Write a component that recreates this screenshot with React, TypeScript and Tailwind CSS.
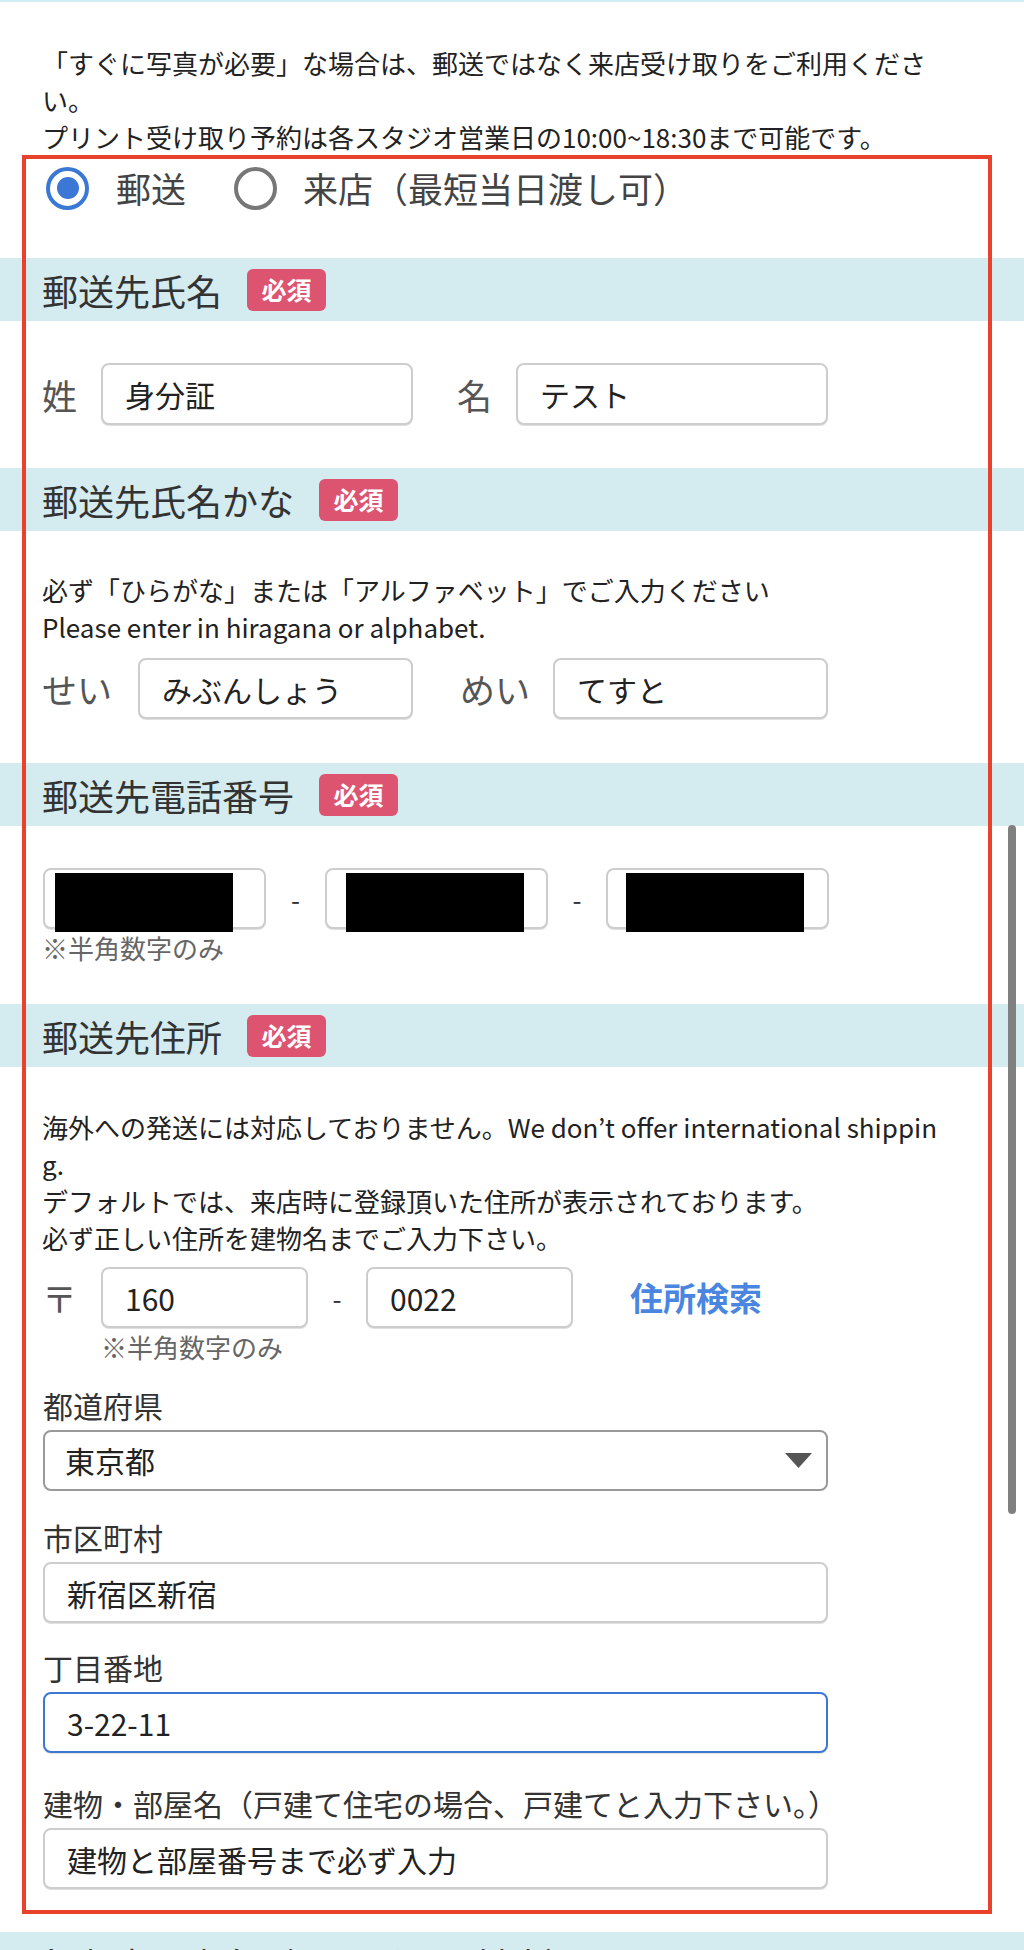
import React from 'react';

const SectionHeader = ({ title, required = true }: { title: string; required?: boolean }) => (
  <div className="flex h-[63px] items-center bg-[#d4ecf0] px-[42px]">
    <span className="text-[36px] leading-none text-[#333]">{title}</span>
    {required && (
      <span className="ml-[25px] flex h-[42px] w-[79px] items-center justify-center rounded-[6px] bg-[#dc5470] text-[25px] font-bold leading-none text-white">
        必須
      </span>
    )}
  </div>
);

const TextInput = ({
  value,
  className = '',
  focused = false,
}: {
  value: string;
  className?: string;
  focused?: boolean;
}) => (
  <input
    readOnly
    value={value}
    className={`h-[61px] rounded-[8px] border-2 bg-white pl-[22px] text-[30px] leading-[40px] text-[#222] shadow-[0_1px_0_rgba(0,0,0,0.12)] outline-none ${
      focused ? 'border-[#3b78d6]' : 'border-[#cdcdcd]'
    } ${className}`}
  />
);

const Radio = ({ checked }: { checked: boolean }) =>
  checked ? (
    <span className="flex h-[43px] w-[43px] shrink-0 items-center justify-center rounded-full border-[4px] border-[#3b78d6]">
      <span className="h-[22px] w-[22px] rounded-full bg-[#3b78d6]" />
    </span>
  ) : (
    <span className="block h-[43px] w-[43px] shrink-0 rounded-full border-[4px] border-[#777]" />
  );

const PhoneBox = ({ offset }: { offset: string }) => (
  <div className="relative">
    <TextInput value="" className="w-[223px]" />
    {/* redacted */}
    <div className={`absolute top-[5px] h-[59px] w-[178px] bg-black ${offset}`} />
  </div>
);

const Field = ({ label, className = '', children }: { label: string; className?: string; children: React.ReactNode }) => (
  <div className={className}>
    <div className="mb-[5px] text-[30px] leading-[40px] text-[#333]">{label}</div>
    {children}
  </div>
);

export default function App() {
  return (
    <div className="relative h-[1950px] w-[1024px] overflow-hidden border-t-2 border-[#cfeef4] bg-white font-['Noto_Sans_CJK_JP',sans-serif] text-[#222]">
      {/* Intro */}
      <p className="px-[42px] pt-[42px] text-[26px] leading-[37px]">
        「すぐに写真が必要」な場合は、郵送ではなく来店受け取りをご利用くださ
        <br />
        い。
        <br />
        プリント受け取り予約は各スタジオ営業日の10:00~18:30まで可能です。
      </p>

      {/* Shipping form */}
      <div className="relative pb-[25px]">
        {/* Delivery method */}
        <div className="flex items-center pl-[46px] pt-[11px]">
          <Radio checked />
          <span className="ml-[27px] text-[35px] leading-[44px] text-[#444]">郵送</span>
          <span className="ml-[48px] flex">
            <Radio checked={false} />
          </span>
          <span className="ml-[26px] text-[35px] leading-[44px] text-[#444]">来店（最短当日渡し可）</span>
        </div>

        {/* Name */}
        <div className="mt-[48px]">
          <SectionHeader title="郵送先氏名" />
        </div>
        <div className="mt-[42px] flex items-center px-[42px]">
          <span className="text-[35px] leading-none text-[#555]">姓</span>
          <TextInput value="身分証" className="ml-[24px] h-[62px] w-[312px]" />
          <span className="ml-[44px] text-[35px] leading-none text-[#555]">名</span>
          <TextInput value="テスト" className="ml-[24px] h-[62px] w-[312px]" />
        </div>

        {/* Kana */}
        <div className="mt-[43px]">
          <SectionHeader title="郵送先氏名かな" />
        </div>
        <p className="mt-[40px] px-[42px] text-[26px] leading-[37px]">
          必ず「ひらがな」または「アルファベット」でご入力ください
          <br />
          Please enter in hiragana or alphabet.
        </p>
        <div className="mt-[13px] flex items-center px-[42px]">
          <span className="text-[35px] leading-none text-[#555]">せい</span>
          <TextInput value="みぶんしょう" className="ml-[26px] w-[275px]" />
          <span className="ml-[47px] text-[35px] leading-none text-[#555]">めい</span>
          <TextInput value="てすと" className="ml-[23px] w-[275px]" />
        </div>

        {/* Phone */}
        <div className="mt-[44px]">
          <SectionHeader title="郵送先電話番号" />
        </div>
        <div className="mt-[42px] flex items-center pl-[43px]">
          <PhoneBox offset="left-[12px]" />
          <span className="w-[59px] text-center text-[26px] text-[#333]">-</span>
          <PhoneBox offset="left-[21px]" />
          <span className="w-[58px] text-center text-[26px] text-[#333]">-</span>
          <PhoneBox offset="left-[20px]" />
        </div>
        <p className="px-[42px] text-[26px] leading-[37px] text-[#666]">※半角数字のみ</p>

        {/* Address */}
        <div className="mt-[38px]">
          <SectionHeader title="郵送先住所" />
        </div>
        <p className="mt-[41px] px-[42px] text-[26px] leading-[37px]">
          海外への発送には対応しておりません。We don’t offer international shippin
          <br />
          g.
          <br />
          デフォルトでは、来店時に登録頂いた住所が表示されております。
          <br />
          必ず正しい住所を建物名までご入力下さい。
        </p>
        <div className="mt-[11px] flex items-center px-[42px]">
          <span className="text-[35px] leading-none text-[#555]">〒</span>
          <TextInput value="160" className="ml-[24px] w-[207px]" />
          <span className="w-[58px] text-center text-[26px] text-[#333]">-</span>
          <TextInput value="0022" className="w-[207px]" />
          <span className="ml-[57px] text-[33px] font-bold leading-none text-[#4a86e0]">住所検索</span>
        </div>
        <p className="pl-[101px] text-[26px] leading-[38px] text-[#666]">※半角数字のみ</p>

        <div className="px-[43px]">
          <Field label="都道府県" className="mt-[19px]">
            <div className="relative w-[785px]">
              <select
                defaultValue="東京都"
                className="h-[61px] w-full appearance-none rounded-[8px] border-2 border-[#999] bg-white pl-[20px] text-[30px] text-[#222] outline-none"
              >
                <option>東京都</option>
              </select>
              <svg className="pointer-events-none absolute right-[16px] top-[23px]" width="27" height="15" viewBox="0 0 27 15">
                <polygon points="0,0 27,0 13.5,15" fill="#555" />
              </svg>
            </div>
          </Field>
          <Field label="市区町村" className="mt-[26px]">
            <TextInput value="新宿区新宿" className="w-[785px]" />
          </Field>
          <Field label="丁目番地" className="mt-[24px]">
            <TextInput value="3-22-11" focused className="w-[785px]" />
          </Field>
          <Field label="建物・部屋名（戸建て住宅の場合、戸建てと入力下さい。）" className="mt-[30px]">
            <TextInput value="建物と部屋番号まで必ず入力" className="w-[785px]" />
          </Field>
        </div>

        {/* highlight frame */}
        <div className="pointer-events-none absolute bottom-0 left-[22px] right-[32px] top-0 z-10 border-[4px] border-[#e8412c]" />
      </div>

      {/* Receipt */}
      <div className="mt-[18px]">
        <SectionHeader title="領収書の宛名（インボイス対応）" required={false} />
      </div>

      {/* scrollbar */}
      <div className="absolute left-[1008px] top-[823px] h-[689px] w-[8px] rounded-full bg-[#808080]" />
    </div>
  );
}
